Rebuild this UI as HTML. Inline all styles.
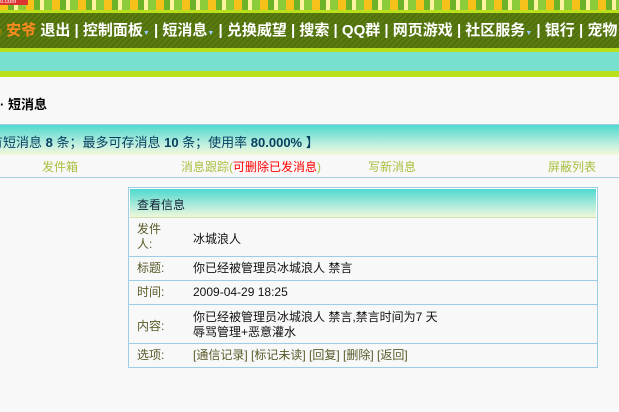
<!DOCTYPE html>
<html><head><meta charset="utf-8"><style>
*{margin:0;padding:0;box-sizing:border-box}
body{width:619px;height:412px;overflow:hidden;background:#f8f8f8;font-family:"Liberation Sans","Noto Sans CJK SC",sans-serif;font-size:12px;position:relative}
.ban{position:absolute;left:0;top:0;width:619px;height:10px;background:repeating-linear-gradient(90deg,#f6c21a 0 8px,#6cb32a 8px 14px,#fff3a0 14px 18px,#8ccc3a 18px 26px)}
.logo{position:absolute;left:0;top:0;width:28px;height:5px;background:#d33;color:#fff;font-size:6px;line-height:5px}
.l1{position:absolute;top:10px;left:0;width:619px;height:3px;background:#b9e01a}
.nav{position:absolute;top:13px;left:-6px;width:660px;height:35px;background:repeating-linear-gradient(135deg,#5a7c10 0 2px,#4f700c 2px 4px);color:#fff;font-size:15px;font-weight:bold;line-height:36px;white-space:nowrap;font-family:"Liberation Sans","Noto Sans CJK SC",sans-serif}
.a{color:#9cf;font-size:7px}
.l2{position:absolute;top:48px;left:0;width:619px;height:4px;background:#b9e01a}
.teal{position:absolute;top:52px;left:0;width:619px;height:19px;background:#77e0cf}
.l3{position:absolute;top:71px;left:0;width:619px;height:6px;background:#b9e01a}
h1{position:absolute;top:94px;left:0;font-size:13px;font-weight:bold}
.bar{position:absolute;top:124px;left:0;width:619px;height:31px;border-top:1px solid #a6cfe0;background:linear-gradient(#4fd9cf,#c8f0e0 70%,#f4f8d8);color:#084060;font-size:13px;line-height:36px;white-space:nowrap;overflow:hidden}
.tabs{position:absolute;top:155px;left:0;width:619px;height:23px;border-bottom:1px solid #a6cfe0;color:#a8c040;line-height:24px}
.tabs span{position:absolute}
.box{position:absolute;left:128px;top:187px;width:470px;height:181px;border:1px solid #9ccfe6}
.hd{height:30px;background:linear-gradient(#4fd9cf,#bfeedd 70%,#eef8d8);border:1px solid #fff;border-bottom:1px solid #d0e0b8;padding-left:7px;line-height:32px;font-size:12px;color:#123}
.r{border-bottom:1px solid #9ccfe6;position:relative;font-size:12px}
.r .k{position:absolute;left:8px;color:#5a5a2a}
.r .v{position:absolute;left:64px;color:#111}
</style></head><body>
<div class="ban"><div class="logo">o.com</div></div>
<div class="l1"></div>
<div class="nav"><span style="color:#f0a000;font-size:8px">◎</span> <span style="color:#ff8a20">安爷</span> 退出 | 控制面板<span class="a">▼</span> | 短消息<span class="a">▼</span> | 兑换威望 | 搜索 | QQ群 | 网页游戏 | 社区服务<span class="a">▼</span> | 银行 | 宠物</div>
<div class="l2"></div><div class="teal"></div><div class="l3"></div>
<h1>· 短消息</h1>
<div class="bar"><span style="margin-left:-10px">有短消息 <b>8</b> 条；最多可存消息 <b>10</b> 条；使用率 <b>80.000%</b> 】</span></div>
<div class="tabs"><span style="left:42px">发件箱</span><span style="left:181px">消息跟踪(<span style="position:static;color:#f00">可删除已发消息</span>)</span><span style="left:368px">写新消息</span><span style="left:548px">屏蔽列表</span></div>
<div class="box">
<div class="hd">查看信息</div>
<div class="r" style="height:39px"><span class="k" style="top:4px;line-height:15px">发件<br>人:</span><span class="v" style="top:12px">冰城浪人</span></div>
<div class="r" style="height:24px;line-height:23px"><span class="k">标题:</span><span class="v">你已经被管理员冰城浪人 禁言</span></div>
<div class="r" style="height:24px;line-height:23px"><span class="k">时间:</span><span class="v">2009-04-29 18:25</span></div>
<div class="r" style="height:39px"><span class="k" style="top:12px">内容:</span><span class="v" style="top:5px;line-height:15px">你已经被管理员冰城浪人 禁言,禁言时间为7 天<br>辱骂管理+恶意灌水</span></div>
<div class="r" style="height:24px;line-height:23px;border-bottom:none"><span class="k">选项:</span><span class="v" style="color:#5a5a2a">[通信记录] [标记未读] [回复] [删除] [返回]</span></div>
</div>
</body></html>
